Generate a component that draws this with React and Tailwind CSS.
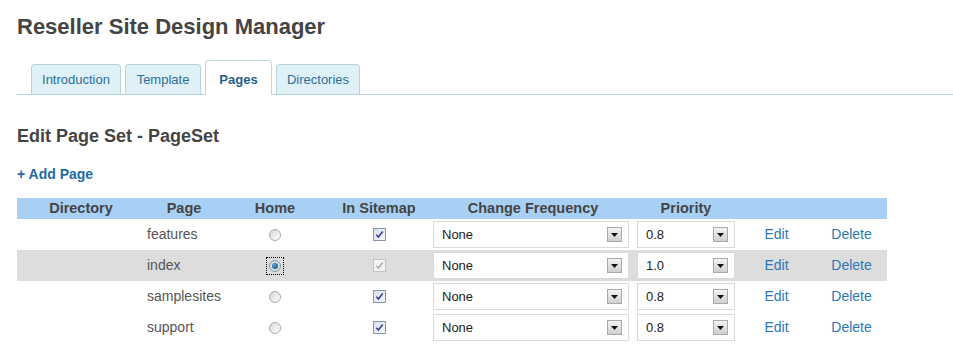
import React from "react";

const cols = "grid grid-cols-[128px_78px_104px_104px_204px_102px_79px_71px]";

function Radio({ checked }) {
  if (checked) {
    return (
      <div className="flex h-[18px] w-[18px] items-center justify-center border border-dotted border-black">
        <div className="flex h-[12px] w-[12px] items-center justify-center rounded-full border border-[#8a9aa8] bg-[radial-gradient(circle,#e8eef3_0%,#c9d3db_100%)]">
          <div className="h-[6px] w-[6px] rounded-full bg-[radial-gradient(circle_at_40%_35%,#5fa8d8_0%,#1b5e8e_70%,#143f60_100%)]" />
        </div>
      </div>
    );
  }
  return (
    <div className="h-[12px] w-[12px] rounded-full border border-[#a8a8a8] bg-[linear-gradient(135deg,#d6d6d6_0%,#f4f4f4_70%,#ffffff_100%)]" />
  );
}

function Checkbox({ disabled }) {
  return (
    <div
      className={
        disabled
          ? "flex h-[13px] w-[13px] items-center justify-center border border-[#c4c4c4] bg-[#f2f2f2]"
          : "flex h-[13px] w-[13px] items-center justify-center border border-[#8596ae] bg-[linear-gradient(135deg,#d9dfeb_0%,#f5f7fb_100%)]"
      }
    >
      <svg width="11" height="11" viewBox="0 0 11 11">
        <path
          d="M2.3 5.7 L4.4 8 L8.7 2.5"
          fill="none"
          stroke={disabled ? "#adadad" : "#2d3f91"}
          strokeWidth="1.5"
        />
      </svg>
    </div>
  );
}

function Select({ value, width }) {
  return (
    <div
      className={`flex h-[27px] items-center justify-between border border-[#dadada] bg-white pl-[8px] pr-[6px] ${width}`}
    >
      <span className="text-[13px] text-[#222]">{value}</span>
      <div className="flex h-[15px] w-[15px] items-center justify-center border border-[#a9a9a9] bg-[linear-gradient(180deg,#f3f3f3_0%,#cfcfcf_100%)]">
        <svg width="7" height="4" viewBox="0 0 7 4">
          <polygon points="0,0 7,0 3.5,4" fill="#111" />
        </svg>
      </div>
    </div>
  );
}

const rows = [
  { page: "features", home: false, pr: "0.8" },
  { page: "index", home: true, pr: "1.0" },
  { page: "samplesites", home: false, pr: "0.8" },
  { page: "support", home: false, pr: "0.8" },
];

export default function App() {
  return (
    <div className="min-h-[356px] bg-white pl-[17px] pt-[13px] font-['Liberation_Sans',Arial,sans-serif]">
      <h1 className="text-[22px] font-bold leading-[28px] text-[#444]">
        Reseller Site Design Manager
      </h1>

      <div className="mt-[19px] flex items-end gap-[4px] border-b border-[#b7d2df] pl-[14px]">
        <div className="h-[30px] w-[90px] rounded-t-[4px] border border-b-0 border-[#b7d2df] bg-[#dff0f7] pt-[1px] text-center text-[13px] leading-[28px] text-[#2c6e9c]">
          Introduction
        </div>
        <div className="h-[30px] w-[76px] rounded-t-[4px] border border-b-0 border-[#b7d2df] bg-[#dff0f7] pt-[1px] text-center text-[13px] leading-[28px] text-[#2c6e9c]">
          Template
        </div>
        <div className="-mb-px h-[35px] w-[67px] rounded-t-[4px] border border-b-0 border-[#c4d6df] bg-white pt-[5px] text-center text-[13px] font-bold leading-[28px] text-[#1f5f8c]">
          Pages
        </div>
        <div className="h-[30px] w-[84px] rounded-t-[4px] border border-b-0 border-[#b7d2df] bg-[#dff0f7] pt-[1px] text-center text-[13px] leading-[28px] text-[#2c6e9c]">
          Directories
        </div>
      </div>

      <h2 className="mt-[30px] text-[18px] font-bold leading-[22px] text-[#444]">
        Edit Page Set - PageSet
      </h2>

      <div className="mt-[18px] text-[14px] font-bold leading-[18px] text-[#1e6aa7]">
        + Add Page
      </div>

      <div className="mt-[15px] w-[870px]">
        <div className={`${cols} h-[21px] items-center bg-[#a8d0f5] text-center text-[14.5px] font-bold text-[#444]`}>
          <div>Directory</div>
          <div>Page</div>
          <div>Home</div>
          <div>In Sitemap</div>
          <div>Change Frequency</div>
          <div>Priority</div>
          <div></div>
          <div></div>
        </div>
        {rows.map((r, i) => (
          <div
            key={r.page}
            className={`${cols} h-[31px] items-center ${i === 1 ? "bg-[#dddddd]" : "bg-white"}`}
          >
            <div></div>
            <div className="pl-[2px] text-[14px] text-[#555]">{r.page}</div>
            <div className="flex justify-center">
              <Radio checked={r.home} />
            </div>
            <div className="flex justify-center">
              <Checkbox disabled={r.home} />
            </div>
            <div className="pl-[2px]">
              <Select value="None" width="w-[196px]" />
            </div>
            <div className="pl-[2px]">
              <Select value={r.pr} width="w-[98px]" />
            </div>
            <div className="text-center text-[14px] text-[#2b78b6]">Edit</div>
            <div className="text-center text-[14px] text-[#2b78b6]">Delete</div>
          </div>
        ))}
      </div>
    </div>
  );
}
